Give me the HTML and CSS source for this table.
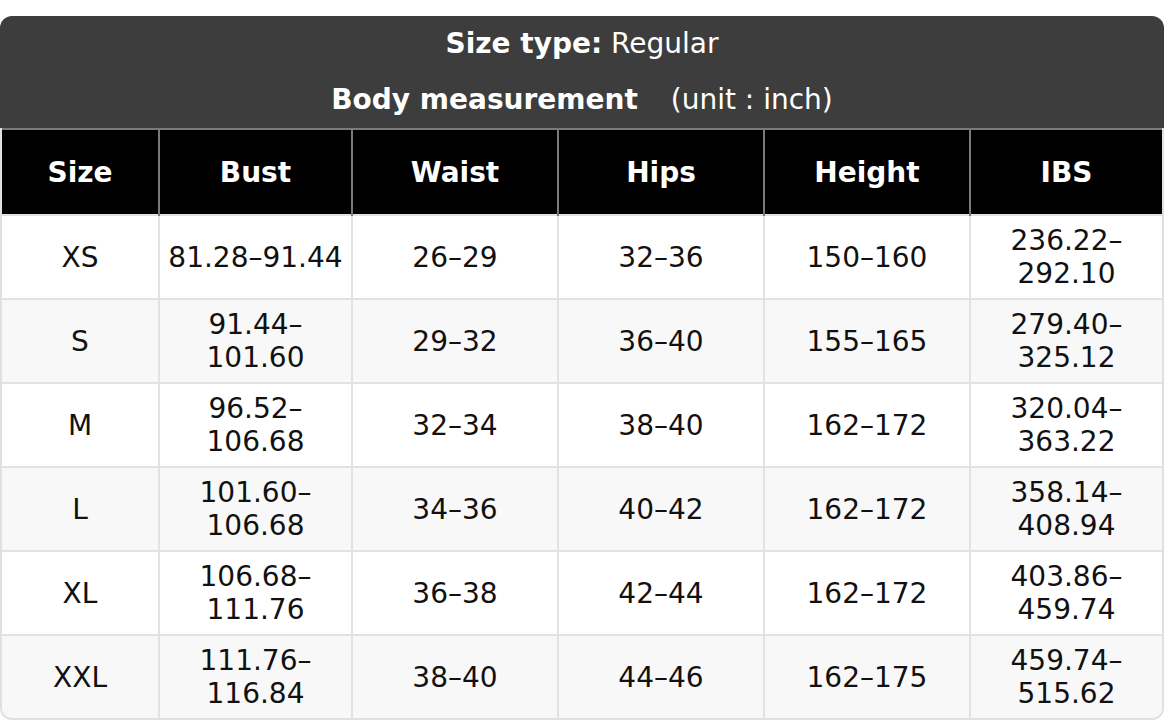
FILE: index.html
```html
<!DOCTYPE html>
<html>
<head>
<meta charset="utf-8">
<link rel="stylesheet" href="styles.css">
</head>
<body>
<div class="chart">
  <div class="chart-head">
    <div class="head-line"><b>Size type:</b> Regular</div>
    <div class="head-line"><b>Body measurement</b><span class="unit">(unit : inch)</span></div>
  </div>
  <div class="table-wrap">
    <table class="size-table">
      <colgroup>
        <col class="c1"><col class="c2"><col class="c3"><col class="c4"><col class="c5"><col class="c6">
      </colgroup>
      <thead>
        <tr><th>Size</th><th>Bust</th><th>Waist</th><th>Hips</th><th>Height</th><th>IBS</th></tr>
      </thead>
      <tbody>
        <tr><td>XS</td><td>81.28–91.44</td><td>26–29</td><td>32–36</td><td>150–160</td><td>236.22–<br>292.10</td></tr>
        <tr><td>S</td><td>91.44–<br>101.60</td><td>29–32</td><td>36–40</td><td>155–165</td><td>279.40–<br>325.12</td></tr>
        <tr><td>M</td><td>96.52–<br>106.68</td><td>32–34</td><td>38–40</td><td>162–172</td><td>320.04–<br>363.22</td></tr>
        <tr><td>L</td><td>101.60–<br>106.68</td><td>34–36</td><td>40–42</td><td>162–172</td><td>358.14–<br>408.94</td></tr>
        <tr><td>XL</td><td>106.68–<br>111.76</td><td>36–38</td><td>42–44</td><td>162–172</td><td>403.86–<br>459.74</td></tr>
        <tr><td>XXL</td><td>111.76–<br>116.84</td><td>38–40</td><td>44–46</td><td>162–175</td><td>459.74–<br>515.62</td></tr>
      </tbody>
    </table>
  </div>
</div>
</body>
</html>
```

FILE: styles.css
```css
html, body {
  margin: 0;
  padding: 0;
  background: #ffffff;
}

body {
  font-family: "DejaVu Sans", sans-serif;
  font-size: 28px;
  color: #111111;
  padding-top: 16px;
}

.chart {
  width: 1164px;
}

.chart-head {
  background: #3d3d3d;
  color: #ffffff;
  border-radius: 12px 12px 0 0;
  height: 112px;
  box-sizing: border-box;
  padding-top: 11px;
  display: flex;
  flex-direction: column;
  align-items: center;
  gap: 23px;
}

.head-line {
  line-height: 33px;
  text-align: center;
}

.unit {
  margin-left: 33px;
}

.table-wrap {
  border: 2px solid #e0e0e0;
  border-top: none;
  border-radius: 0 0 12px 12px;
  overflow: hidden;
}

.size-table {
  width: 1160px;
  border-collapse: collapse;
  table-layout: fixed;
}

.c1 { width: 157px; }
.c2 { width: 193px; }
.c3 { width: 206px; }
.c4 { width: 206px; }
.c5 { width: 206px; }
.c6 { width: 192px; }

.size-table th {
  background: #000000;
  color: #ffffff;
  font-weight: bold;
  height: 84px;
  border: 2px solid #7a7a7a;
  border-bottom: none;
  padding: 0;
  text-align: center;
}

.size-table td {
  height: 82px;
  border: 2px solid #e2e2e2;
  padding: 0;
  text-align: center;
  line-height: 33px;
  vertical-align: middle;
}

.size-table tr > :first-child {
  border-left: none;
}

.size-table tr > :last-child {
  border-right: none;
}

.size-table tbody tr:last-child td {
  border-bottom: none;
}

.size-table tbody tr:nth-child(even) td {
  background: #f8f8f8;
}

.size-table tbody tr:nth-child(odd) td {
  background: #ffffff;
}
```
